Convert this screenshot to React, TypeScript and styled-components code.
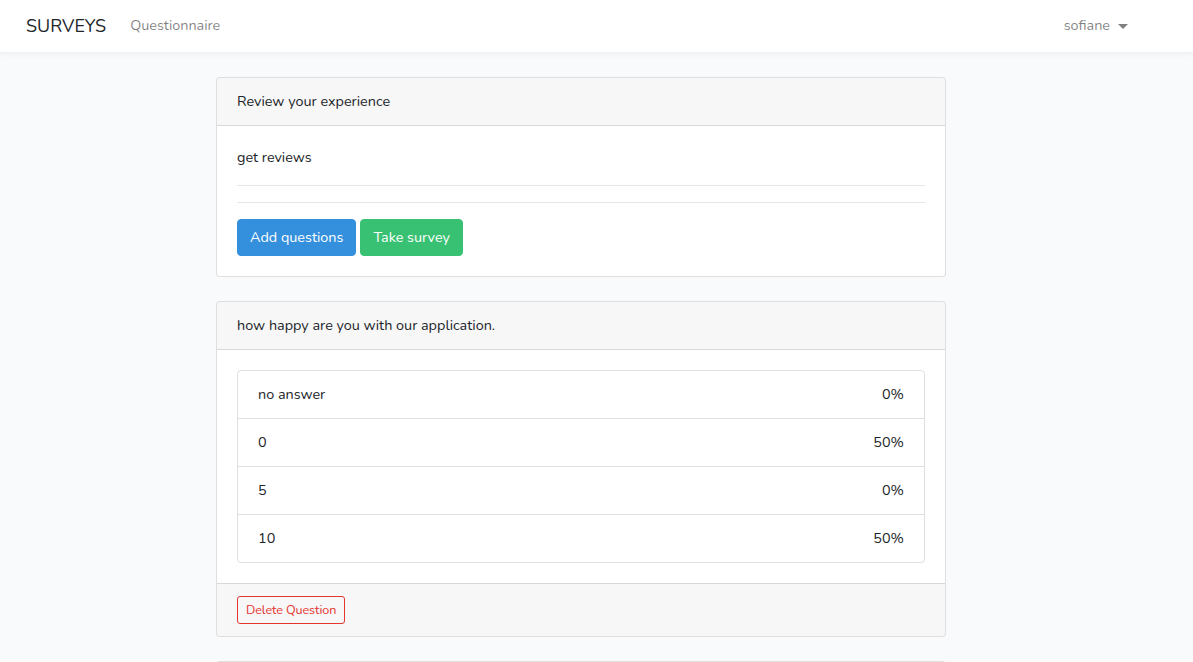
import React from "react"
import styled, { createGlobalStyle } from "styled-components"

const GlobalStyle = createGlobalStyle`
  * { box-sizing: border-box; }
  body {
    margin: 0;
    background: #f8fafc;
    font-family: Nunito, Lato, "Noto Sans", sans-serif;
    font-size: 14.4px;
    line-height: 1.6;
    color: #212529;
  }
`

const Navbar = styled.nav`
  height: 53px;
  background: #fff;
  box-shadow: 0 2px 4px rgba(0, 0, 0, 0.04);
  border-bottom: 1px solid #eef0f2;
  display: flex;
  align-items: center;
  padding: 0 65px 0 26px;
`
const Brand = styled.a`
  font-size: 18px;
  color: #212529;
  margin-right: 24px;
`
const NavLink = styled.a`
  color: rgba(0, 0, 0, 0.5);
  font-size: 14.4px;
`
const Spacer = styled.div`
  flex: 1;
`
const UserMenu = styled.a`
  color: rgba(0, 0, 0, 0.5);
  display: flex;
  align-items: center;
  gap: 8px;
  &::after {
    content: "";
    border-top: 5px solid rgba(0, 0, 0, 0.5);
    border-left: 5px solid transparent;
    border-right: 5px solid transparent;
    margin-top: 1px;
  }
`

const Main = styled.main`
  padding: 24px 0 0 216px;
  display: flex;
  flex-direction: column;
  gap: 24px;
`
const Card = styled.section<{ $minHeight?: number }>`
  width: 730px;
  min-height: ${(p) => p.$minHeight ?? 0}px;
  background: #fff;
  border: 1px solid rgba(0, 0, 0, 0.125);
  border-radius: 4px;
  overflow: hidden;
`
const CardHeader = styled.div`
  background: rgba(0, 0, 0, 0.03);
  border-bottom: 1px solid rgba(0, 0, 0, 0.125);
  padding: 12px 20px;
`
const CardBody = styled.div`
  padding: 20px;
`
const CardFooter = styled.div`
  background: rgba(0, 0, 0, 0.03);
  border-top: 1px solid rgba(0, 0, 0, 0.125);
  padding: 12px 20px;
`
const Text = styled.p`
  margin: 0 0 16px;
`
const Rule = styled.hr`
  border: 0;
  border-top: 1px solid rgba(0, 0, 0, 0.1);
  margin: 0 0 16px;
`
const ButtonRow = styled.div`
  display: flex;
  gap: 4px;
`
const Button = styled.button<{ $color: string }>`
  font-family: inherit;
  font-size: 14.4px;
  line-height: 1.6;
  padding: 6px 12px;
  border-radius: 4px;
  border: 1px solid ${(p) => p.$color};
  background: ${(p) => p.$color};
  color: #fff;
`
const OutlineButton = styled.button<{ $color: string }>`
  font-family: inherit;
  font-size: 12.6px;
  line-height: 1.4;
  padding: 4px 8px;
  border-radius: 3px;
  border: 1px solid ${(p) => p.$color};
  background: transparent;
  color: ${(p) => p.$color};
  letter-spacing: -0.1px;
`
const ListGroup = styled.ul`
  list-style: none;
  margin: 0;
  padding: 0;
  border: 1px solid rgba(0, 0, 0, 0.125);
  border-radius: 4px;
`
const ListItem = styled.li`
  display: flex;
  justify-content: space-between;
  padding: 12px 20px;
  & + & {
    border-top: 1px solid rgba(0, 0, 0, 0.125);
  }
`

const results = [
  { label: "no answer", value: "0%" },
  { label: "0", value: "50%" },
  { label: "5", value: "0%" },
  { label: "10", value: "50%" },
]

export default function App() {
  return (
    <>
      <GlobalStyle />
      <Navbar>
        <Brand>SURVEYS</Brand>
        <NavLink>Questionnaire</NavLink>
        <Spacer />
        <UserMenu>sofiane</UserMenu>
      </Navbar>
      <Main>
        <Card>
          <CardHeader>Review your experience</CardHeader>
          <CardBody>
            <Text>get reviews</Text>
            <Rule />
            <Rule />
            <ButtonRow>
              <Button $color="#3490dc">Add questions</Button>
              <Button $color="#38c172">Take survey</Button>
            </ButtonRow>
          </CardBody>
        </Card>
        <Card>
          <CardHeader>how happy are you with our application.</CardHeader>
          <CardBody>
            <ListGroup>
              {results.map((r) => (
                <ListItem key={r.label}>
                  <span>{r.label}</span>
                  <span>{r.value}</span>
                </ListItem>
              ))}
            </ListGroup>
          </CardBody>
          <CardFooter>
            <OutlineButton $color="#e3342f">Delete Question</OutlineButton>
          </CardFooter>
        </Card>
        <Card $minHeight={48} />
      </Main>
    </>
  )
}
